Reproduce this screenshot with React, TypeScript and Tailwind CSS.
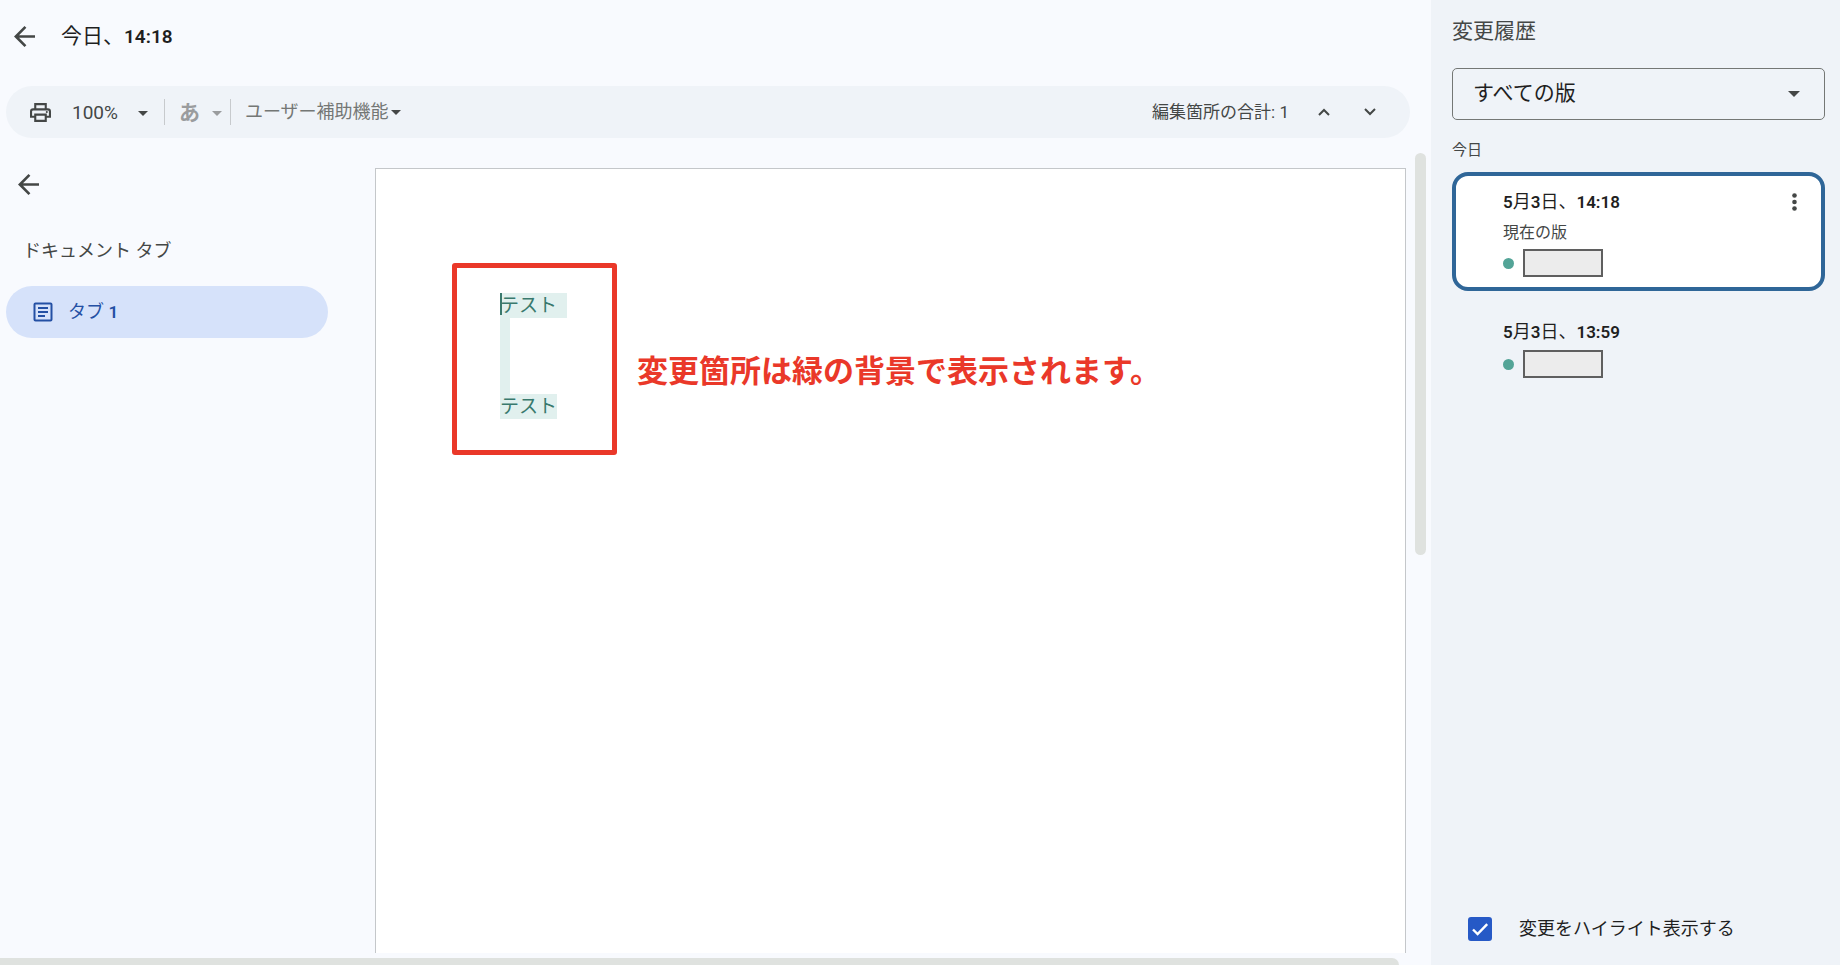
import React, { useState } from 'react';

interface Version {
  id: number;
  month: number;
  day: number;
  time: string;
  note?: string;
}

const versions: Version[] = [
  { id: 1, month: 5, day: 3, time: '14:18', note: '現在の版' },
  { id: 2, month: 5, day: 3, time: '13:59' },
];

const CaretIcon = ({ className }: { className?: string }) => (
  <svg className={className} viewBox="0 0 10 5" fill="currentColor" aria-hidden="true">
    <path d="M0 0h10L5 5z" />
  </svg>
);

const BackIcon = () => (
  <svg className="w-[21px] h-[21px]" viewBox="0 0 16 16" fill="currentColor" aria-hidden="true">
    <path d="M3.83 9l5.6 5.6L8 16 0 8l8-8 1.42 1.4L3.83 7H16v2z" />
  </svg>
);

const PrintIcon = () => (
  <svg className="w-[21px] h-[19px]" viewBox="0 0 20 18" fill="currentColor" fillRule="evenodd" aria-hidden="true">
    <path d="M14 5V2H6v3H4V0h12v5zM16 9.5a1 1 0 1 0 0-2 1 1 0 0 0 0 2zM14 16v-4H6v4zm2 2H4v-4H0V8a3 3 0 0 1 3-3h14a3 3 0 0 1 3 3v6h-4zm2-6V8a1 1 0 0 0-1-1H3a1 1 0 0 0-1 1v4h2v-2h12v2z" />
  </svg>
);

const TabIcon = () => (
  <svg className="w-5 h-5" viewBox="0 0 20 20" fill="none" stroke="currentColor" strokeWidth={2} aria-hidden="true">
    <rect x="1.5" y="1.5" width="17" height="17" rx="1" />
    <path d="M5 6h10M5 10h10M5 14h7" strokeWidth={1.8} />
  </svg>
);

const ChevronIcon = ({ d }: { d: string }) => (
  <svg className="w-3 h-2" viewBox="0 0 12 8" fill="none" stroke="currentColor" strokeWidth={2} aria-hidden="true">
    <path d={d} />
  </svg>
);

// Digits are set heavier than the kanji around them
const Digits = ({ children }: { children: React.ReactNode }) => (
  <span className="text-[17px] font-semibold">{children}</span>
);

const VersionCard = ({ version, selected, onSelect }: { version: Version; selected: boolean; onSelect: () => void }) => (
  <li
    onClick={onSelect}
    className={`flex items-start justify-between rounded-2xl border-4 pl-[47px] pr-6 ${
      selected ? 'border-[#2f6698] bg-white pt-3 pb-[10px]' : 'border-transparent pt-[23px] pb-[10px]'
    }`}
  >
    <div>
      <h3 className="text-lg leading-7 text-[#1f1f1f]">
        <Digits>{version.month}</Digits>月<Digits>{version.day}</Digits>日、<Digits>{version.time}</Digits>
      </h3>
      {version.note && <p className="mt-[5px] text-base leading-6 text-[#444746]">{version.note}</p>}
      <div className="mt-1 flex items-center gap-[9px]">
        <span className="size-[11px] rounded-full bg-[#53a497]" />
        <span className="h-7 w-20 border-2 border-[#5f5f5f] bg-[#ececec]" />
      </div>
    </div>
    {selected && (
      <button aria-label="その他の操作" className="mt-[5px] text-[#444746]">
        <svg className="w-[5px] h-[18px]" viewBox="0 0 5 18" fill="currentColor" aria-hidden="true">
          <circle cx="2.5" cy="2.5" r="2.3" />
          <circle cx="2.5" cy="9" r="2.3" />
          <circle cx="2.5" cy="15.5" r="2.3" />
        </svg>
      </button>
    )}
  </li>
);

export default function App() {
  const [selectedId, setSelectedId] = useState(1);
  const [highlight, setHighlight] = useState(true);

  return (
    <div className="h-screen bg-white pb-[7px] font-[Roboto,'Noto_Sans_CJK_JP',sans-serif] text-[#444746]">
      <div className="flex h-full">
        <main className="flex min-w-0 flex-1 flex-col bg-[#f8fafe]">
          {/* Header */}
          <header className="flex items-center gap-[26px] pt-5 pl-[14px]">
            <button aria-label="戻る">
              <BackIcon />
            </button>
            <h1 className="text-[21px] leading-8 text-[#1f1f1f]">
              今日、<span className="text-[19px] font-semibold">14:18</span>
            </h1>
          </header>

          {/* Toolbar */}
          <div className="mt-[33px] mr-[21px] ml-[6px] flex h-[52px] shrink-0 items-center rounded-full bg-[#eff3f8] pr-[34px] pl-6">
            <button aria-label="印刷">
              <PrintIcon />
            </button>
            <button className="ml-[21px] flex items-center gap-5 pt-[2px] text-[19px] leading-6">
              100%
              <CaretIcon className="h-[5px] w-[10px]" />
            </button>
            <span className="ml-4 h-[26px] w-px bg-[#c7cacd]" />
            <button className="ml-[14px] flex items-center gap-3 pt-[2px] text-[21px] leading-6 font-bold text-[#9a9c9e]">
              あ
              <CaretIcon className="h-[5px] w-[10px]" />
            </button>
            <span className="ml-2 h-[26px] w-px bg-[#c7cacd]" />
            <button className="ml-[14px] flex items-center gap-[2px] text-lg leading-6">
              <span className="text-[#747775]">ユーザー補助機能</span>
              <CaretIcon className="h-[5px] w-[10px]" />
            </button>
            <span className="ml-auto text-[17px] leading-6">編集箇所の合計: 1</span>
            <button aria-label="前の編集" className="ml-[29px]">
              <ChevronIcon d="M1 7l5-5 5 5" />
            </button>
            <button aria-label="次の編集" className="ml-[34px]">
              <ChevronIcon d="M1 1l5 5 5-5" />
            </button>
          </div>

          <div className="flex min-h-0 flex-1">
            {/* Document tabs */}
            <nav className="w-[375px] shrink-0 pt-9 pl-[6px]">
              <button aria-label="タブを閉じる" className="ml-3 block">
                <BackIcon />
              </button>
              <h2 className="mt-[42px] ml-[17px] text-lg leading-7">ドキュメント タブ</h2>
              <button className="mt-[21px] flex h-[52px] w-[322px] items-center gap-[15px] rounded-full bg-[#d6e2fa] pl-[27px] text-lg leading-6 text-[#2450a4]">
                <TabIcon />
                <span>
                  タブ <Digits>1</Digits>
                </span>
              </button>
            </nav>

            {/* Page */}
            <div className="mt-[30px] mb-[5px] flex min-h-0 min-w-0 flex-1 self-stretch">
              <article className="flex flex-1 items-start border border-b-0 border-[#c4c7ca] bg-white pt-[94px] pl-[76px]">
                <div className="h-[192px] w-[165px] rounded-[3px] border-5 border-[#ea3829] pt-[25px] pl-[43px] text-[19px] leading-[25px] text-[#39796d]">
                  <p className="flex w-[67px] bg-[#e1f0ee]">
                    <span className="-mr-[2px] h-[22px] w-[2px] bg-[#39796d]" />
                    テスト
                  </p>
                  <div className="h-[76px] w-[10px] bg-[#e1f0ee]" />
                  <p className="w-[57px] bg-[#e1f0ee]">テスト</p>
                </div>
                <p className="mt-[91px] ml-5 text-[31px] leading-9 font-bold text-[#ea3829]">
                  変更箇所は緑の背景で表示されます。
                </p>
              </article>
            </div>
            <div className="w-[25px] shrink-0 pt-[15px] pl-[9px]">
              <div className="h-[402px] w-[11px] rounded-full bg-[#dfe2df]" />
            </div>
          </div>
          <div className="mr-8 h-[7px] shrink-0 rounded-tr-full bg-[#dfe2df]" />
        </main>

        {/* Version history */}
        <aside className="flex w-[409px] shrink-0 flex-col bg-[#eff3f8] pr-[15px] pl-[21px]">
          <h2 className="pt-[15px] text-[21px] leading-8">変更履歴</h2>
          <div className="relative mt-[21px]">
            <select
              aria-label="表示する版"
              className="block h-[52px] w-full appearance-none rounded-[5px] border border-[#747775] bg-transparent pl-5 text-[21px] text-[#1f1f1f]"
            >
              <option>すべての版</option>
            </select>
            <CaretIcon className="pointer-events-none absolute top-[23px] right-[25px] h-[6px] w-3" />
          </div>
          <h3 className="mt-[18px] mb-[10px] text-[15px] leading-6">今日</h3>
          <ul>
            {versions.map((version) => (
              <VersionCard
                key={version.id}
                version={version}
                selected={version.id === selectedId}
                onSelect={() => setSelectedId(version.id)}
              />
            ))}
          </ul>
          <label className="mt-auto mb-[22px] flex items-center gap-[27px] pl-4 text-lg leading-7 text-[#1f1f1f]">
            <span className="relative size-6">
              <input
                type="checkbox"
                checked={highlight}
                onChange={(e) => setHighlight(e.target.checked)}
                className="block size-6 appearance-none rounded-[3px] border-2 border-[#2659c6] checked:bg-[#2659c6]"
              />
              {highlight && (
                <svg className="pointer-events-none absolute inset-0 size-6" viewBox="0 0 24 24" fill="none" stroke="#fff" strokeWidth={2.4} aria-hidden="true">
                  <path d="M5 12.5l4.6 4.6L19.2 7.2" />
                </svg>
              )}
            </span>
            変更をハイライト表示する
          </label>
        </aside>
      </div>
    </div>
  );
}
